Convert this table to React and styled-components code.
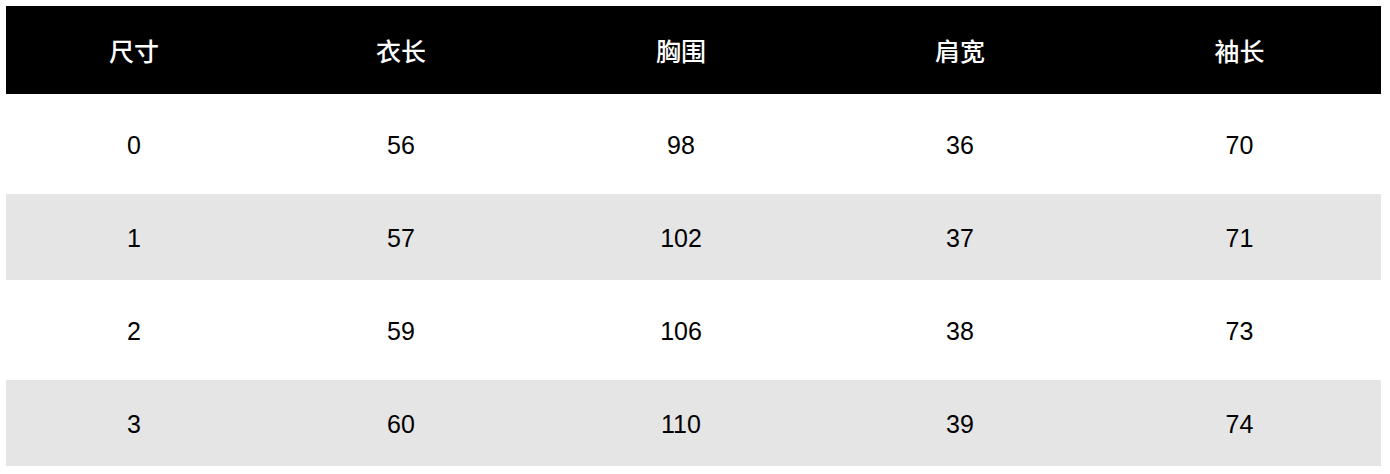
import styled, { createGlobalStyle } from 'styled-components';

const GlobalStyle = createGlobalStyle`
    body{
        margin: 0;
        background: #fff;
        font-family: "Liberation Sans", "Noto Sans CJK SC", sans-serif;
    }
`

const Wrapper = styled.div`
    padding: 6px 9px 8px 6px;
`

const Table = styled.div`
    display: grid;
    grid-template-columns: 256px 278px 282px 276px 283px;
    width: 1375px;
`

const Row = styled.div`
    display: contents;
`

const Cell = styled.div`
    display: flex;
    align-items: center;
    justify-content: center;
    box-sizing: border-box;
    height: ${props => props.$height}px;
    padding-top: ${props => props.$head ? 0 : 3}px;
    background-color: ${props => props.$bg};
    color: ${props => props.$color};
    font-size: 25px;
    font-family: ${props => props.$head
        ? '"Noto Sans CJK SC", sans-serif'
        : '"Liberation Sans", "Noto Sans CJK SC", sans-serif'};
    font-weight: ${props => props.$head ? 500 : 400};
`

const headers = ['尺寸', '衣长', '胸围', '肩宽', '袖长']

const rows = [
    ['0', '56', '98', '36', '70'],
    ['1', '57', '102', '37', '71'],
    ['2', '59', '106', '38', '73'],
    ['3', '60', '110', '39', '74'],
]

const App = () => {
    return(
        <>
        <GlobalStyle/>
        <Wrapper>
            <Table>
                <Row>
                    {headers.map(h => (
                        <Cell key={h} $head $height={88} $bg="#000" $color="#fff">{h}</Cell>
                    ))}
                </Row>
                {rows.map((r, i) => (
                    <Row key={i}>
                        {r.map((v, j) => (
                            <Cell
                                key={j}
                                $height={i % 2 === 0 ? 100 : 86}
                                $bg={i % 2 === 0 ? '#fff' : '#e5e5e5'}
                                $color="#000"
                            >
                                {v}
                            </Cell>
                        ))}
                    </Row>
                ))}
            </Table>
        </Wrapper>
        </>
    )
}

export default App
